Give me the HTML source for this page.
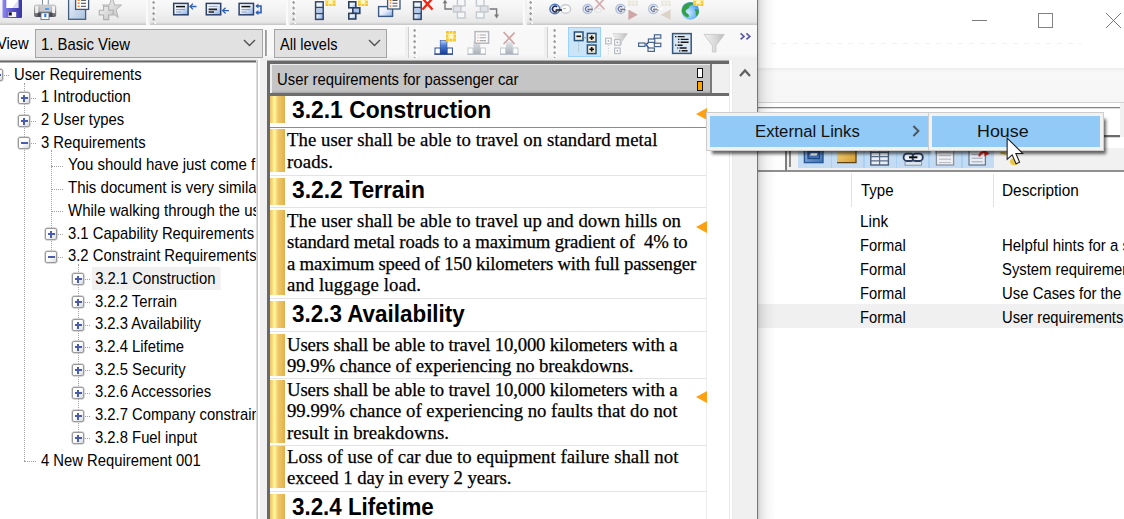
<!DOCTYPE html>
<html>
<head>
<meta charset="utf-8">
<title>Requirements</title>
<style>
*{box-sizing:border-box;margin:0;padding:0}
html,body{width:1124px;height:519px;overflow:hidden;background:#fff}
body{position:relative;font-family:"Liberation Sans",sans-serif;color:#000}
.abs{position:absolute}
/* ---------- left application window ---------- */
#win{left:0;top:0;width:757px;height:519px;background:#f0f0f0;overflow:hidden}
#shadow{left:758px;top:0;width:18px;height:519px;background:linear-gradient(90deg,rgba(0,0,0,.2) 0,rgba(0,0,0,.1) 3px,rgba(0,0,0,.04) 9px,rgba(0,0,0,0) 18px)}
#winedge{left:757px;top:0;width:1px;height:519px;background:#767676}
.strip{top:0;height:26px;background:linear-gradient(180deg,#f9f9f9 0,#f1f1f1 50%,#e7e7e7 22px,#d6d6d6 23.5px,#c4c4c4 25px,#e8e8e8 26px);border-right:2px solid #fafafa}
.grip{width:5px;height:24px;top:0;background-image:radial-gradient(circle at 1.6px 2.4px,#9c9c9c 1px,rgba(255,255,255,0) 1.5px),radial-gradient(circle at 2.9px 1.3px,#fff 1px,rgba(255,255,255,0) 1.5px);background-size:5px 5.6px}
#row2{left:0;top:25px;width:757px;height:36px;background:linear-gradient(180deg,#fbfbfb 0,#f8f8f8 6px,#f8f8f8 29px,#f0f0f0 33px,#ececec 36px)}
.combo{top:29px;height:29px;background:#e1e1e1;border:1px solid #a4a4a4;font-size:16.6px;line-height:29px;padding-left:5px;white-space:nowrap}
.combo span{display:inline-block;transform-origin:0 50%}
.vsep{width:2px;top:30px;height:26px;background:linear-gradient(90deg,#8f8f8f,#b5b5b5)}
/* tree */
#tree{left:-2px;top:60px;width:258px;height:470px;background:#fff;border-top:1px solid #a0a0a0;box-shadow:inset 0 1.5px 0 #696969;overflow:hidden}
.tn{position:absolute;height:23px;line-height:23px;font-size:16.6px;white-space:nowrap;transform:scaleX(.893);transform-origin:0 50%}
.bx{position:absolute;width:12px;height:12px;border:1px solid #9a9a9a;box-shadow:0 0 0 .5px #b5b5b5;border-radius:2px;background:linear-gradient(135deg,#fff 0,#fff 45%,#d9dbe0 100%)}
.bx:before{content:"";position:absolute;left:1.5px;top:4.4px;width:7px;height:1.3px;background:#4a5cae}
.bx.p:after{content:"";position:absolute;left:4.4px;top:1.5px;width:1.3px;height:7px;background:#4a5cae}
.hd{position:absolute;height:1px;border-top:1px dotted #a0a0a0}
.vd{position:absolute;width:1px;border-left:1px dotted #a0a0a0}
/* doc */
#doc{left:267px;top:61px;width:462px;height:470px;background:#fff;border-left:3px solid #696969;border-top:3px solid #696969;overflow:hidden}
.row{position:absolute;left:0;width:436px;border-bottom:1px solid #e3e3e3}
.gold{position:absolute;left:0;width:15px;background:linear-gradient(90deg,#edc262 0,#f6d77c 2px,#fff69a 4.5px,#f7dc80 6.5px,#eec668 8.5px,#e8bc5a 12px,#e0af4c 15px)}
.h{position:absolute;left:22px;font-weight:700;font-size:23.6px;white-space:nowrap;transform:scaleX(.968);transform-origin:0 0}
.t{position:absolute;left:17px;font-family:"Liberation Serif",serif;font-size:18.75px;white-space:nowrap;-webkit-text-stroke:0.25px #000}
.tri{position:absolute;width:0;height:0;border-top:6px solid transparent;border-bottom:6px solid transparent;border-right:11.5px solid #ffa012}
/* right */
.cell{position:absolute;font-size:16.3px;white-space:nowrap;line-height:24px;height:24px;transform-origin:0 50%}
.menu{background:#f2f2f2;border:1px solid #ccc;box-shadow:4px 5px 3px -2px rgba(0,0,0,.6)}
.mi{position:absolute;background:#91c9f7;font-size:16.7px;white-space:nowrap;color:#111}
.mi span{display:inline-block;transform-origin:0 50%}
</style>
</head>
<body>
<!-- right background window -->
<!--RS--><div class="abs" id="right" style="left:757px;top:0;width:367px;height:519px;background:#fff;overflow:hidden">
<div class="abs" style="left:215px;top:20px;width:15px;height:1px;background:#7c7c7c"></div>
<div class="abs" style="left:281px;top:13px;width:15px;height:15px;border:1px solid #828282"></div>
<svg class="abs" style="left:348px;top:12px" width="17" height="17" viewBox="0 0 17 17"><path d="M1 1 L16 16 M16 1 L1 16" stroke="#7a7a7a" stroke-width="1" fill="none"/></svg>
<div class="abs" style="left:14px;top:43px;width:310px;height:1px;background:repeating-linear-gradient(90deg,#f1f1f1 0 5px,#fff 5px 11px)"></div>
<div class="abs" style="left:0;top:68px;width:367px;height:35px;background:linear-gradient(180deg,#ededed 0,#f3f3f3 2px,#f8f8f8 5px,#f6f6f6 100%)"></div>
<div class="abs" style="left:0;top:102px;width:367px;height:1px;background:#d2d2d2"></div>
<div class="abs" style="left:0;top:107px;width:363px;height:1px;background:#848484"></div>
<div class="abs" style="left:0;top:108px;width:363px;height:1px;background:#dedede"></div>
<div class="abs" style="left:363px;top:103px;width:4px;height:34px;background:#f1f1f1"></div>
<div class="abs" style="left:343px;top:135px;width:20px;height:2px;background:#6a6a6a"></div>
<div class="abs" style="left:343px;top:137px;width:20px;height:1px;background:#d8d8d8"></div>
<div class="abs" style="left:0;top:148px;width:367px;height:23px;background:#f1f1f1"></div>
<div class="abs" style="left:0;top:148px;width:28px;height:23px;background:#fdfdfd"></div>
<div class="abs" style="left:0;top:170px;width:367px;height:1.5px;background:#8f8f8f"></div>
<div class="abs" style="left:28px;top:148px;width:1.5px;height:23px;background:#7d7d7d"></div>
<div class="abs" style="left:32px;top:148px;width:1.5px;height:19px;background:#8a8a8a"></div>
<div class="abs" style="left:41px;top:148px;width:196px;height:20px;background:#c4dcf3"></div>
<div class="abs" style="left:73.6px;top:148px;width:1.5px;height:20px;background:#a9d1f6"></div>
<div class="abs" style="left:106.2px;top:148px;width:1.5px;height:20px;background:#a9d1f6"></div>
<div class="abs" style="left:138.8px;top:148px;width:1.5px;height:20px;background:#a9d1f6"></div>
<div class="abs" style="left:171.4px;top:148px;width:1.5px;height:20px;background:#a9d1f6"></div>
<div class="abs" style="left:204.0px;top:148px;width:1.5px;height:20px;background:#a9d1f6"></div>
<svg class="abs" style="left:41px;top:148px" width="240" height="23" viewBox="798 148 240 23">
<defs><linearGradient id="rg1" x1="0" y1="0" x2="1" y2="1"><stop offset="0" stop-color="#f7dc8a"/><stop offset="1" stop-color="#d89a2c"/></linearGradient>
<linearGradient id="rg2" x1="0" y1="0" x2="1" y2="1"><stop offset="0" stop-color="#9dbde6"/><stop offset="1" stop-color="#3d6eb0"/></linearGradient></defs>
<rect x="804.4" y="146" width="18.6" height="16.6" fill="url(#rg2)" stroke="#2a5a96" stroke-width="1.4"/><rect x="808" y="150.6" width="11.4" height="8" fill="#3f70b4" stroke="#1f4a84" stroke-width="1.2"/><path d="M810 155.6L811 153H817.6L816.6 155.6Z" fill="#fff"/>
<rect x="837" y="146" width="18.6" height="16.4" fill="url(#rg1)"/><path d="M837 162.6H856V146" fill="none" stroke="#5a431a" stroke-width="1.3"/>
<rect x="870.8" y="146" width="17.6" height="19" fill="#e8eef6" stroke="#4a5d78" stroke-width="1.4"/><path d="M870.8 152.4H888.4M870.8 156.6H888.4M870.8 160.8H888.4M879.6 146V165" stroke="#5a6d88" stroke-width="1.2"/><rect x="872" y="146.4" width="15.4" height="5" fill="#6c7d96"/>
<rect x="905" y="161.6" width="16.6" height="3.6" fill="#dfe6f0" stroke="#7d8ca6" stroke-width=".9"/><rect x="903.6" y="153.6" width="10.4" height="7.4" rx="3.6" fill="#eef2f8" stroke="#2c3e60" stroke-width="1.9"/><rect x="912.4" y="153.6" width="10.4" height="7.4" rx="3.6" fill="#eef2f8" stroke="#2c3e60" stroke-width="1.9"/><path d="M909 157.3H917.4" stroke="#111" stroke-width="2"/>
<rect x="936.4" y="146" width="17.2" height="19" fill="#eef0f3" stroke="#8b939f" stroke-width="1.3"/><path d="M939 152H951M939 155.6H951M939 159.2H951M939 162.6H951" stroke="#b3b9c2" stroke-width="1"/>
<rect x="969" y="150" width="16.4" height="15" fill="#e9edf3" stroke="#6b7a90" stroke-width="1.3"/><path d="M971.6 154.6H982.6M971.6 158.2H982.6M971.6 161.8H982.6" stroke="#9aa5b5" stroke-width="1"/><path d="M979.4 156.4C979.6 153 982 151.6 985.4 152.4" stroke="#e02010" stroke-width="2.2" fill="none"/><path d="M984 149.6L989.6 153.4L984.6 156.4Z" fill="#e02010"/>
<ellipse cx="1014.4" cy="161.6" rx="4.6" ry="3.6" fill="#e9c64a"/><path d="M1000.6 153.4C1003 152.6 1005 153.2 1006 154.6" stroke="#d9b43c" stroke-width="2.4" fill="none"/>
</svg>
<div class="abs" style="left:94px;top:174px;width:1px;height:33px;background:#e2e2e2"></div>
<div class="abs" style="left:236px;top:174px;width:1px;height:33px;background:#e2e2e2"></div>
<div class="cell" style="left:103.6px;top:178.2px;transform:scaleX(.923)">Type</div>
<div class="cell" style="left:244.8px;top:178.2px;transform:scaleX(.943)">Description</div>
<div class="abs" style="left:0;top:304px;width:367px;height:24px;background:#f0f0f0"></div>
<div class="cell" style="left:102.6px;top:208.6px;transform:scaleX(0.944)">Link</div>
<div class="cell" style="left:102.6px;top:232.6px;transform:scaleX(0.902)">Formal</div>
<div class="cell" style="left:245.2px;top:232.6px;transform:scaleX(0.918)">Helpful hints for a successful</div>
<div class="cell" style="left:102.6px;top:256.6px;transform:scaleX(0.902)">Formal</div>
<div class="cell" style="left:245.2px;top:256.6px;transform:scaleX(0.910)">System requirements for</div>
<div class="cell" style="left:102.6px;top:280.6px;transform:scaleX(0.902)">Formal</div>
<div class="cell" style="left:245.2px;top:280.6px;transform:scaleX(0.915)">Use Cases for the car</div>
<div class="cell" style="left:102.6px;top:304.6px;transform:scaleX(0.902)">Formal</div>
<div class="cell" style="left:245.2px;top:304.6px;transform:scaleX(0.906)">User requirements for</div>
</div><!--RE-->
<div class="abs" id="win">
<!-- toolbar row 1 -->
<div class="abs strip" style="left:0;width:148px"></div>
<div class="abs strip" style="left:150px;width:138px"></div>
<div class="abs strip" style="left:290px;width:235px"></div>
<div class="abs strip" style="left:527px;width:232px"></div>
<div class="abs grip" style="left:152px"></div>
<div class="abs grip" style="left:292px"></div>
<div class="abs grip" style="left:529px"></div>
<!--I1S--><svg class="abs" style="left:0;top:0" width="757" height="25" viewBox="0 0 757 25">
<defs>
<linearGradient id="gb" x1="0" y1="0" x2="1" y2="1"><stop offset="0" stop-color="#fff"/><stop offset=".5" stop-color="#e6eefb"/><stop offset="1" stop-color="#7fa8e6"/></linearGradient>
<linearGradient id="gg" x1="0" y1="0" x2="1" y2="1"><stop offset="0" stop-color="#fff"/><stop offset="1" stop-color="#cfd3d8"/></linearGradient>
<linearGradient id="gfl" x1="0" y1="0" x2="1" y2="0"><stop offset="0" stop-color="#8f8af0"/><stop offset=".45" stop-color="#5a55cc"/><stop offset="1" stop-color="#3a38a0"/></linearGradient>
<linearGradient id="gdoc" x1="0" y1="0" x2="1" y2="1"><stop offset="0" stop-color="#f1f5fb"/><stop offset="1" stop-color="#a9c2df"/></linearGradient>
<linearGradient id="gpr" x1="0" y1="0" x2="0" y2="1"><stop offset="0" stop-color="#cfcfcf"/><stop offset=".45" stop-color="#9a9a9a"/><stop offset="1" stop-color="#5f5f66"/></linearGradient>
<linearGradient id="gst" x1="0" y1="0" x2="1" y2="1"><stop offset="0" stop-color="#f4f4f4"/><stop offset="1" stop-color="#c4c4c4"/></linearGradient>
<radialGradient id="gglobe" cx=".4" cy=".6" r=".7"><stop offset="0" stop-color="#cfeaff"/><stop offset=".6" stop-color="#6db7f5"/><stop offset="1" stop-color="#2f86d8"/></radialGradient>
<g id="star"><rect x="0" y="0" width="10" height="8" fill="#f6c62c"/><path d="M0 2.6H10M0 5.3H10M3.3 0V8M6.6 0V8" stroke="#fde88a" stroke-width="1.1"/><circle cx="5" cy="4" r="2.2" fill="#fff6c8"/></g>
<g id="stard"><rect x="0" y="0" width="10" height="8" fill="#dcd6c2"/><path d="M0 2.6H10M0 5.3H10M3.3 0V8M6.6 0V8" stroke="#f1eee4" stroke-width="1.1"/></g>
<g id="stk"><rect x=".8" y=".8" width="7.6" height="17.6" fill="url(#gb)" stroke="#33486a" stroke-width="1.5"/><path d="M.8 6.6H8.4M.8 12.6H8.4" stroke="#33486a" stroke-width="1.5"/><rect x="1.8" y="7.6" width="5.6" height="4" fill="#b4cbf0"/></g>
<g id="lnk"><ellipse cx="5.3" cy="5.2" rx="4.6" ry="4.4" fill="#f4f6fb" stroke="#9fb0cc" stroke-width="1.5"/><path d="M7 3.3A2.4 2.4 0 1 0 7 7" fill="none" stroke="#3b4a9a" stroke-width="1.3"/><path d="M5 5.6H10.5" stroke="#555" stroke-width="1.6"/></g>
</defs>
<rect x="2.5" y="-2" width="19.5" height="20" rx="1" fill="url(#gfl)"/>
<rect x="6.3" y="-2" width="12" height="10" fill="#fff"/><path d="M12 8 L18.3 0V8Z" fill="#dcdcf2"/>
<rect x="8.4" y="12" width="7.8" height="5" fill="#f4f4fa"/><rect x="8.8" y="12.3" width="3" height="3.2" fill="#15152a"/>
<rect x="42.4" y="-2" width="5.8" height="8" fill="#fff" stroke="#5d7186" stroke-width=".8"/>
<rect x="34" y="4.6" width="22.2" height="12.3" rx="2" fill="url(#gpr)"/>
<rect x="35.2" y="6" width="3.2" height="7" fill="#efefef"/><rect x="51.8" y="6" width="3.2" height="7" fill="#efefef"/>
<rect x="39.5" y="5.5" width="11.5" height="6" fill="#c9c9c9"/>
<rect x="45" y="8" width="4.2" height="2" rx=".8" fill="#4da0f5"/>
<rect x="37.8" y="12.6" width="14.6" height="4.2" fill="#4a4550"/>
<rect x="41" y="12.8" width="8" height="6.8" fill="#fff" stroke="#5d7186" stroke-width=".9"/><rect x="44.2" y="13.8" width="2.2" height="3.4" fill="#3f7be8"/>
<rect x="68.6" y="-2" width="17" height="21.3" fill="url(#gdoc)" stroke="#44607f" stroke-width="1.3"/>
<rect x="75.6" y="-2" width="13" height="11.4" fill="#fbfbfb" stroke="#3f5878" stroke-width="1.3"/>
<path d="M81 0.3H86M81 3.3H86M81 6.3H86" stroke="#666" stroke-width="1.2"/><path d="M77.6 0.3H79.6M77.6 3.3H79.6M77.6 6.3H79.6" stroke="#ff7a1a" stroke-width="1.4"/>
<path d="M112 -3 L114.6 5 L121.6 5 L116.2 9.6 L118.2 17.5 L112 13 L107 16 L107.8 9.6 L102.6 5 L109.4 5Z" fill="url(#gst)" stroke="#b4b4b4" stroke-width="1"/>
<path d="M103.6 6.2H108.8V10.2H113.2V15H108.8V19.6H103.6V15H99.3V10.2H103.6Z" fill="url(#gst)" stroke="#aeaeae" stroke-width="1.1"/>
<rect x="173.7" y="3.4" width="14.4" height="11.4" fill="url(#gb)" stroke="#2b426b" stroke-width="1.5"/>
<path d="M176 6.6H185" stroke="#111" stroke-width="1.5"/><path d="M176 9.6H185M176 12H181" stroke="#8d9db8" stroke-width="1"/>
<path d="M190 6.5H196.5M193 3.6L190 6.5L193 9.4" fill="none" stroke="#2f5fb8" stroke-width="1.3"/>
<rect x="206.3" y="3.4" width="14.4" height="11.4" fill="url(#gb)" stroke="#2b426b" stroke-width="1.5"/>
<path d="M208.6 6.4H217.6" stroke="#9aa8bf" stroke-width="1"/><path d="M208.6 9.4H217M208.6 12H214" stroke="#222" stroke-width="1.6"/>
<path d="M222.6 10.6H229M225.6 7.7L222.6 10.6L225.6 13.5" fill="none" stroke="#2f5fb8" stroke-width="1.3"/>
<rect x="239.1" y="3.4" width="14.4" height="11.4" fill="url(#gb)" stroke="#2b426b" stroke-width="1.5"/>
<path d="M241.4 6.6H250.4" stroke="#111" stroke-width="1.5"/><path d="M241.4 9.6H250.4M241.4 12H246.4" stroke="#8d9db8" stroke-width="1"/>
<path d="M256 6H261V12.6H256" fill="none" stroke="#2f5fb8" stroke-width="1.6"/><path d="M258.4 3.4L255.4 6L258.4 8.6ZM258.4 10L255.4 12.6L258.4 15.2Z" fill="#2f5fb8"/>
<use href="#stk" x="314.8" y="1"/><use href="#star" x="325.5" y="-2"/>
<rect x="348.8" y="1.8" width="7.0" height="6.0" fill="url(#gb)" stroke="#2c3f5e" stroke-width="1.6"/>
<rect x="352.8" y="7.8" width="7.0" height="5.6" fill="#a9c4ee" stroke="#2c3f5e" stroke-width="1.6"/>
<rect x="348.8" y="13.4" width="7.0" height="5.6" fill="url(#gb)" stroke="#2c3f5e" stroke-width="1.6"/>
<use href="#star" x="358" y="-2"/>
<rect x="378.6" y="6.6" width="14.0" height="9.8" fill="url(#gb)" stroke="#3f5a82" stroke-width="1.4"/>
<rect x="387.6" y="-2.0" width="12.4" height="11.0" fill="#fafafa" stroke="#3f5878" stroke-width="1.3"/>
<path d="M392.5 0.4H397.5M392.5 3.2H397.5M392.5 6H397.5" stroke="#555" stroke-width="1.1"/><path d="M389.6 0.4H391.2M389.6 3.2H391.2M389.6 6H391.2" stroke="#ff7a1a" stroke-width="1.3"/>
<use href="#stk" x="412.8" y="1"/>
<path d="M423 -1L432.5 9.5M432 -1L422.5 9.5" stroke="#f02410" stroke-width="2.3" fill="none"/>
<rect x="457.4" y="-1.0" width="7.6" height="7.0" fill="#f6f7f9" stroke="#c4c8cf" stroke-width="1.4"/>
<rect x="453.4" y="6.0" width="7.6" height="6.0" fill="#dfe3e8" stroke="#c4c8cf" stroke-width="1.4"/>
<rect x="457.4" y="12.0" width="7.6" height="6.0" fill="#f6f7f9" stroke="#c4c8cf" stroke-width="1.4"/>
<path d="M445 1V9H452" fill="none" stroke="#7a7a7a" stroke-width="1.4"/><path d="M442.6 3.2L445 -0.4L447.4 3.2Z" fill="#7a7a7a"/>
<rect x="476.4" y="-1.0" width="7.6" height="7.0" fill="#f6f7f9" stroke="#c4c8cf" stroke-width="1.4"/>
<rect x="480.4" y="6.0" width="7.6" height="6.0" fill="#dfe3e8" stroke="#c4c8cf" stroke-width="1.4"/>
<rect x="476.4" y="12.0" width="7.6" height="6.0" fill="#f6f7f9" stroke="#c4c8cf" stroke-width="1.4"/>
<path d="M489.6 9H496.6V15" fill="none" stroke="#7a7a7a" stroke-width="1.4"/><path d="M494.2 14.4L496.6 18.4L499 14.4Z" fill="#7a7a7a"/>
<ellipse cx="565.6" cy="9" rx="5" ry="4.2" fill="#fafafa" stroke="#c9ccd2" stroke-width="1.4"/>
<ellipse cx="554.8" cy="9" rx="4.9" ry="4.7" fill="#e9eef8" stroke="#4f78bd" stroke-width="1.5"/><path d="M557 6.8A2.8 2.8 0 1 0 557 11.2" fill="none" stroke="#20264a" stroke-width="1.5"/><path d="M555.6 10H562" stroke="#222" stroke-width="1.6"/><path d="M563 8.6h3" stroke="#bbb" stroke-width="1"/>
<g opacity=".75"><use href="#lnk" x="582.4" y="3.8"/></g><path d="M595 -1L604.5 9.5M604 -1L594.5 9.5" stroke="#d3aeb0" stroke-width="1.8" fill="none"/><ellipse cx="598" cy="10.4" rx="3.4" ry="2.2" fill="none" stroke="#e2e2e6" stroke-width="1"/>
<g opacity=".75"><use href="#lnk" x="615.2" y="3.8"/></g><g opacity=".55"><use href="#stard" x="628" y="-2"/></g><path d="M628.4 9.6L637.8 14.8L628.4 20Z" fill="#cfa6a6"/><path d="M625 8.6h5" stroke="#fff" stroke-width="1.6"/>
<g opacity=".7"><use href="#lnk" x="648" y="3.8"/></g><g opacity=".5"><use href="#stard" x="661" y="-2"/></g><path d="M670.6 9.6L660.8 14.8L670.6 20Z" fill="#dcd2c8"/><path d="M657 8.6h6" stroke="#fff" stroke-width="1.6"/>
<circle cx="690.2" cy="10.8" r="8.9" fill="url(#gglobe)"/>
<path d="M683 6.5C685 3.5 689 2 692.6 2.6C694 3.4 692.6 5 690.6 5.6C688.6 6.4 689.6 8.4 687.6 9C685.8 9.6 685 11 686 12.4C687 13.6 688.6 13.6 689 15.4C689.2 17 687.6 17.6 686 16.8C683.4 15.4 681.8 13 681.8 10.5C682 9 682.4 7.6 683 6.5Z" fill="#34a044"/>
<path d="M695 9C696.4 8.6 698 9.4 698.8 10.8C699 13 698.2 15 696.8 16.2C695.8 15.4 695.6 14 695.8 12.8C696 11.4 694.4 9.8 695 9Z" fill="#34a044"/>
<use href="#star" x="693.4" y="-2"/>
</svg><!--I1E-->
<!-- row 2 -->
<div class="abs" id="row2"></div>
<div class="abs" style="left:-3px;top:29px;height:29px;line-height:29px;font-size:16.6px;transform:scaleX(.89);transform-origin:0 50%">View</div>
<div class="abs combo" style="left:35px;width:228px"><span style="transform:scaleX(.897)">1. Basic View</span></div>
<div class="abs combo" style="left:274px;width:113px"><span style="transform:scaleX(.878)">All levels</span></div>
<svg class="abs" style="left:243px;top:39px" width="13" height="8" viewBox="0 0 13 8"><path d="M1 1 L6.5 6.5 L12 1" fill="none" stroke="#505050" stroke-width="1.4"/></svg>
<svg class="abs" style="left:368px;top:39px" width="13" height="8" viewBox="0 0 13 8"><path d="M1 1 L6.5 6.5 L12 1" fill="none" stroke="#505050" stroke-width="1.4"/></svg>
<div class="abs vsep" style="left:265px"></div>
<div class="abs" style="left:405px;top:27px;width:4px;height:31px;background:#f0f0f0;border-right:1px solid #cfcfcf"></div>
<div class="abs" style="left:544px;top:27px;width:4px;height:31px;background:#f0f0f0;border-right:1px solid #cfcfcf"></div>
<div class="abs grip" style="left:413px;top:28px;height:30px"></div>
<div class="abs grip" style="left:553px;top:28px;height:30px"></div>
<div class="abs" style="left:568px;top:27px;width:33px;height:30px;background:#cce4f7;border:1px solid #99d1ff"></div>
<!--I2S--><svg class="abs" style="left:400px;top:25px" width="357" height="36" viewBox="400 25 357 36">
<defs>
<linearGradient id="hb" x1="0" y1="0" x2="0" y2="1"><stop offset="0" stop-color="#b9cff2"/><stop offset=".35" stop-color="#4f7fd6"/><stop offset="1" stop-color="#143c98"/></linearGradient>
<linearGradient id="hg" x1="0" y1="0" x2="0" y2="1"><stop offset="0" stop-color="#e2e5e9"/><stop offset="1" stop-color="#a9b0b8"/></linearGradient>
<linearGradient id="hf" x1="0" y1="0" x2="1" y2="0"><stop offset="0" stop-color="#f2f2f2"/><stop offset=".6" stop-color="#d6d6d6"/><stop offset="1" stop-color="#b9b9b9"/></linearGradient>
<linearGradient id="hbx" x1="0" y1="0" x2="1" y2="1"><stop offset="0" stop-color="#fbf8ee"/><stop offset="1" stop-color="#e9e2cc"/></linearGradient>
<g id="star2"><rect x="0" y="0" width="10" height="10.4" fill="#f6c62c"/><path d="M0 3.4H10M0 7H10M3.3 0V10.4M6.6 0V10.4" stroke="#fde88a" stroke-width="1.1"/><circle cx="5" cy="5.2" r="2.6" fill="#fff6c8"/></g>
</defs>
<rect x="435" y="48" width="5.4" height="6" fill="#fff" stroke="#2d4f9c" stroke-width="1"/><rect x="447" y="48" width="5.4" height="6" fill="#fff" stroke="#2d4f9c" stroke-width="1"/>
<rect x="440.2" y="40.6" width="6.8" height="13.6" fill="url(#hb)" stroke="#2d4f9c" stroke-width=".6"/>
<path d="M434.3 54.2H453" stroke="#22397a" stroke-width="1"/>
<use href="#star2" x="446" y="31"/>
<rect x="468" y="48" width="5" height="6" fill="#fff" stroke="#c3c8cf" stroke-width="1"/><rect x="480.4" y="48" width="5" height="6" fill="#fff" stroke="#c3c8cf" stroke-width="1"/>
<rect x="473.4" y="41" width="6.8" height="13.2" fill="url(#hg)"/>
<path d="M467.4 54.3H486" stroke="#b0b6bf" stroke-width="1"/>
<rect x="475" y="31.6" width="13.6" height="11.6" fill="#fbfbfb" stroke="#b5b8bd" stroke-width="1.5"/>
<path d="M479.6 35H486M479.6 37.8H486M479.6 40.6H486" stroke="#a9a9a9" stroke-width="1.1"/><path d="M477 35H478.6M477 37.8H478.6M477 40.6H478.6" stroke="#e6b49a" stroke-width="1.1"/>
<rect x="500.6" y="48" width="5" height="6" fill="#fff" stroke="#c3c8cf" stroke-width="1"/><rect x="513" y="48" width="5" height="6" fill="#fff" stroke="#c3c8cf" stroke-width="1"/>
<rect x="506" y="41.6" width="6.8" height="12.6" fill="url(#hg)"/>
<path d="M500 54.3H518.6" stroke="#b0b6bf" stroke-width="1"/>
<path d="M503.6 32L514.6 44M514.6 32.6L503.6 44" stroke="#cfa5a5" stroke-width="1.7" fill="none"/>
<rect x="574.4" y="32.0" width="8.6" height="8.6" fill="url(#hbx)" stroke="#24507e" stroke-width="1.5"/>
<path d="M576.4 36.3H581.0" stroke="#111" stroke-width="1.6"/>
<rect x="587.4" y="33.4" width="8.6" height="8.6" fill="url(#hbx)" stroke="#24507e" stroke-width="1.5"/>
<path d="M589.4 37.7H594.0" stroke="#111" stroke-width="1.6"/>
<path d="M591.7 35.4V40.0" stroke="#111" stroke-width="1.6"/>
<rect x="587.4" y="45.0" width="8.6" height="8.6" fill="url(#hbx)" stroke="#24507e" stroke-width="1.5"/>
<path d="M589.4 49.3H594.0" stroke="#111" stroke-width="1.6"/>
<path d="M591.7 47.0V51.6" stroke="#111" stroke-width="1.6"/>
<path d="M578.7 42.4V53" stroke="#8aa" stroke-width="1" stroke-dasharray="1 1.6"/><path d="M584 37.7H587" stroke="#8aa" stroke-width="1"/><path d="M591.7 42V45" stroke="#8aa" stroke-width="1"/>
<path d="M613 33.6H627.4L621.6 42V44.6H618.2V42Z" fill="url(#hf)" stroke="#c8c8c8" stroke-width=".6"/>
<rect x="605.6" y="38.2" width="5.6" height="5.6" fill="#fafafa" stroke="#b9bec6" stroke-width="1.2"/><rect x="607.7" y="40.3" width="1.4" height="1.4" fill="#999"/>
<rect x="614.6" y="39.6" width="5.6" height="5.6" fill="#fafafa" stroke="#b9bec6" stroke-width="1.2"/><rect x="616.7" y="41.7" width="1.4" height="1.4" fill="#999"/>
<rect x="614.6" y="48.0" width="5.6" height="5.6" fill="#fafafa" stroke="#b9bec6" stroke-width="1.2"/><rect x="616.7" y="50.1" width="1.4" height="1.4" fill="#999"/>
<path d="M608.4 45V54" stroke="#c5c5c5" stroke-width="1" stroke-dasharray="1 1.8"/>
<path d="M645.6 44.6C648 44 649 41 651.4 40.6M651.4 40.6C654 40 654.6 37 656.6 36.4M651.4 40.6C654 41.4 654.6 44.4 656.6 44.8M645.6 44.6C648 45.4 648.4 49 650.4 49.6" stroke="#2b50a8" stroke-width="1.5" fill="none"/>
<rect x="638.6" y="43.0" width="6.4" height="3.4" fill="#f3f6fb" stroke="#4a668c" stroke-width="1.2"/>
<rect x="648.4" y="39.0" width="6.4" height="3.4" fill="#f3f6fb" stroke="#4a668c" stroke-width="1.2"/>
<rect x="654.4" y="34.8" width="6.4" height="3.4" fill="#f3f6fb" stroke="#4a668c" stroke-width="1.2"/>
<rect x="654.4" y="43.2" width="6.4" height="3.4" fill="#f3f6fb" stroke="#4a668c" stroke-width="1.2"/>
<rect x="648.0" y="48.0" width="6.4" height="3.4" fill="#f3f6fb" stroke="#4a668c" stroke-width="1.2"/>
<rect x="672.6" y="33.6" width="18.6" height="19.8" fill="#d9e6f3" stroke="#35577c" stroke-width="1.5"/>
<path d="M677.6 36.6H684.6M680.6 39.4H688.6M680.6 42.2H688.6M677.6 45.2H682.6M679.6 48H686.6M681.6 50.8H687.6" stroke="#1a1a1a" stroke-width="1.4"/>
<path d="M675 36.6h1.4M678 39.4h1.4M678 42.2h1.4M675 45.2h1.4M677 48h1.4M679 50.8h1.4" stroke="#1a1a1a" stroke-width="1.2"/>
<path d="M704 34.4H724.4L716 45.6V52H712.4V45.6Z" fill="url(#hf)" stroke="#c4c4c4" stroke-width=".8"/>
<path d="M740.6 33.4L744 36.4L740.6 39.4M746.4 33.4L749.8 36.4L746.4 39.4" stroke="#5b5aa6" stroke-width="1.7" fill="none"/>
</svg><!--I2E-->
<!--TS--><div class="abs" id="tree">
<div class="vd" style="left:26px;top:22px;height:378px"></div>
<div class="vd" style="left:53px;top:89px;height:106px"></div>
<div class="vd" style="left:80px;top:203px;height:174px"></div>
<div class="tn" style="left:15.8px;top:1.6px">User Requirements</div>
<div class="hd" style="left:6px;top:14px;width:5px"></div>
<div class="bx " style="left:-7px;top:8px"></div>
<div class="tn" style="left:42.8px;top:24.3px">1 Introduction</div>
<div class="hd" style="left:33px;top:37px;width:5px"></div>
<div class="bx p" style="left:20px;top:31px"></div>
<div class="tn" style="left:42.8px;top:47.0px">2 User types</div>
<div class="hd" style="left:33px;top:60px;width:5px"></div>
<div class="bx p" style="left:20px;top:54px"></div>
<div class="tn" style="left:42.8px;top:69.7px">3 Requirements</div>
<div class="hd" style="left:33px;top:82px;width:5px"></div>
<div class="bx " style="left:20px;top:76px"></div>
<div class="tn" style="left:69.8px;top:92.4px;transform:scaleX(.905)">You should have just come from the</div>
<div class="hd" style="left:53px;top:105px;width:12px"></div>
<div class="tn" style="left:69.8px;top:115.1px;transform:scaleX(.905)">This document is very similar to</div>
<div class="hd" style="left:53px;top:128px;width:12px"></div>
<div class="tn" style="left:69.8px;top:137.8px;transform:scaleX(.905)">While walking through the user</div>
<div class="hd" style="left:53px;top:150px;width:12px"></div>
<div class="tn" style="left:69.8px;top:160.5px">3.1 Capability Requirements</div>
<div class="hd" style="left:60px;top:173px;width:5px"></div>
<div class="bx p" style="left:47px;top:167px"></div>
<div class="tn" style="left:69.8px;top:183.2px">3.2 Constraint Requirements</div>
<div class="hd" style="left:60px;top:196px;width:5px"></div>
<div class="bx " style="left:47px;top:190px"></div>
<div class="tn" style="left:96.8px;top:205.9px;background:#f0f0f0;padding:0 6px 0 3.5px;margin-left:-3.2px">3.2.1 Construction</div>
<div class="hd" style="left:87px;top:218px;width:5px"></div>
<div class="bx p" style="left:74px;top:212px"></div>
<div class="tn" style="left:96.8px;top:228.6px">3.2.2 Terrain</div>
<div class="hd" style="left:87px;top:241px;width:5px"></div>
<div class="bx p" style="left:74px;top:235px"></div>
<div class="tn" style="left:96.8px;top:251.3px">3.2.3 Availability</div>
<div class="hd" style="left:87px;top:264px;width:5px"></div>
<div class="bx p" style="left:74px;top:258px"></div>
<div class="tn" style="left:96.8px;top:274.0px">3.2.4 Lifetime</div>
<div class="hd" style="left:87px;top:286px;width:5px"></div>
<div class="bx p" style="left:74px;top:280px"></div>
<div class="tn" style="left:96.8px;top:296.7px">3.2.5 Security</div>
<div class="hd" style="left:87px;top:309px;width:5px"></div>
<div class="bx p" style="left:74px;top:303px"></div>
<div class="tn" style="left:96.8px;top:319.4px">3.2.6 Accessories</div>
<div class="hd" style="left:87px;top:332px;width:5px"></div>
<div class="bx p" style="left:74px;top:326px"></div>
<div class="tn" style="left:96.8px;top:342.1px">3.2.7 Company constraints</div>
<div class="hd" style="left:87px;top:355px;width:5px"></div>
<div class="bx p" style="left:74px;top:349px"></div>
<div class="tn" style="left:96.8px;top:364.8px">3.2.8 Fuel input</div>
<div class="hd" style="left:87px;top:377px;width:5px"></div>
<div class="bx p" style="left:74px;top:371px"></div>
<div class="tn" style="left:42.8px;top:387.5px">4 New Requirement 001</div>
<div class="hd" style="left:26px;top:400px;width:12px"></div>
</div>
<div class="abs" style="left:256px;top:60px;width:2px;height:460px;background:linear-gradient(90deg,#e6e6e6,#bcbcbc)"></div>
<div class="abs" style="left:258px;top:59px;width:2px;height:461px;background:#fdfdfd"></div><!--TE-->
<div class="abs" style="left:267px;top:60px;width:462px;height:1px;background:#b0b0b0"></div>
<!--DS--><div class="abs" id="doc">
<div class="abs" style="left:0;top:0;width:440px;height:29px;background:linear-gradient(180deg,#c5c5c5 0,#c5c5c5 25px,#b4b4b4 27px,#8c8c8c 29px);border-top:1px solid #ececec;border-left:2px solid #ececec"></div>
<div class="abs" style="left:7px;top:0px;height:30px;line-height:31px;font-size:16.4px;white-space:nowrap;transform:scaleX(.905);transform-origin:0 50%">User requirements for passenger car</div>
<div class="abs" style="left:440px;top:0;width:2px;height:29px;background:#7a7a7a"></div>
<div class="abs" style="left:442px;top:0;width:17px;height:29px;background:#f0f0f0"></div>
<div class="abs" style="left:0;top:29px;width:459px;height:3px;background:#6d6d6d"></div>
<div class="abs" style="left:427px;top:4px;width:6px;height:10px;border:1px solid #111;background:#fff"></div>
<div class="abs" style="left:427px;top:17px;width:6px;height:10px;border:1px solid #111;background:#ffa500"></div>
<div class="abs" style="left:436px;top:32px;width:1px;height:460px;background:#ededed"></div>
<div class="row" style="top:32px;height:32px;border-bottom-color:#8c8c8c">
<div class="gold" style="top:0px;bottom:auto;height:27px"></div>
<div class="h" style="top:-0.3px;line-height:28px">3.2.1 Construction</div>
</div>
<div class="row" style="top:64px;height:48px;border-bottom-color:#e3e3e3">
<div class="gold" style="top:1px;bottom:auto;height:43px"></div>
<div class="t" style="top:0.87px;line-height:22px;letter-spacing:0.046px">The user shall be able to travel on standard metal</div>
<div class="t" style="top:22.87px;line-height:22px;letter-spacing:0.115px">roads.</div>
</div>
<div class="row" style="top:112px;height:32px;border-bottom-color:#e3e3e3">
<div class="gold" style="top:2px;bottom:auto;height:27px"></div>
<div class="h" style="top:0.2px;line-height:28px">3.2.2 Terrain</div>
</div>
<div class="row" style="top:144px;height:91px;border-bottom-color:#e3e3e3">
<div class="gold" style="top:2px;bottom:auto;height:85px"></div>
<div class="t" style="top:1.97px;line-height:22px;letter-spacing:0.036px">The user shall be able to travel up and down hills on</div>
<div class="t" style="top:23.37px;line-height:22px;letter-spacing:-0.149px">standard metal roads to a maximum gradient of&nbsp; 4% to</div>
<div class="t" style="top:44.67px;line-height:22px;letter-spacing:-0.222px">a maximum speed of 150 kilometers with full passenger</div>
<div class="t" style="top:65.87px;line-height:22px;letter-spacing:0.072px">and luggage load.</div>
</div>
<div class="row" style="top:235px;height:33px;border-bottom-color:#e3e3e3">
<div class="gold" style="top:2px;bottom:auto;height:27px"></div>
<div class="h" style="top:0.7px;line-height:28px;transform:scaleX(.95)">3.2.3 Availability</div>
</div>
<div class="row" style="top:268px;height:47px;border-bottom-color:#e3e3e3">
<div class="gold" style="top:2px;bottom:auto;height:42px"></div>
<div class="t" style="top:1.57px;line-height:22px;letter-spacing:-0.157px">Users shall be able to travel 10,000 kilometers with a</div>
<div class="t" style="top:22.97px;line-height:22px;letter-spacing:-0.095px">99.9% chance of experiencing no breakdowns.</div>
</div>
<div class="row" style="top:315px;height:67px;border-bottom-color:#e3e3e3">
<div class="gold" style="top:1px;bottom:auto;height:63px"></div>
<div class="t" style="top:-0.23px;line-height:22px;letter-spacing:-0.157px">Users shall be able to travel 10,000 kilometers with a</div>
<div class="t" style="top:21.17px;line-height:22px;letter-spacing:-0.012px">99.99% chance of experiencing no faults that do not</div>
<div class="t" style="top:42.87px;line-height:22px;letter-spacing:0.052px">result in breakdowns.</div>
</div>
<div class="row" style="top:382px;height:46px;border-bottom-color:#e3e3e3">
<div class="gold" style="top:0px;bottom:auto;height:42px"></div>
<div class="t" style="top:-0.13px;line-height:22px;letter-spacing:0.016px">Loss of use of car due to equipment failure shall not</div>
<div class="t" style="top:21.27px;line-height:22px;letter-spacing:-0.072px">exceed 1 day in every 2 years.</div>
</div>
<div class="row" style="top:428px;height:32px;border-bottom-color:#e3e3e3">
<div class="gold" style="top:2px;bottom:auto;height:36px"></div>
<div class="h" style="top:0.8px;line-height:28px;transform:scaleX(.948)">3.2.4 Lifetime</div>
</div>
<div class="tri" style="left:426.0px;top:43.5px"></div>
<div class="tri" style="left:426.0px;top:157.0px"></div>
<div class="tri" style="left:426.0px;top:326.5px"></div>
</div><!--DE-->
<div class="abs" style="left:729px;top:60px;width:28px;height:460px;background:linear-gradient(90deg,#e9e9e9 0,#e9e9e9 1px,#fff 1px,#fff 3px,#e9e9e9 3px,#e9e9e9 4px,#f0f0f0 4px)"></div>
<svg class="abs" style="left:739px;top:68px" width="12" height="9" viewBox="0 0 12 9"><path d="M1 8 L6 2.5 L11 8" fill="none" stroke="#606060" stroke-width="2.2"/></svg>
</div>
<div class="abs" id="winedge"></div>
<div class="abs" id="shadow"></div>
<div class="abs menu" style="left:706px;top:112px;width:224px;height:39px"></div>
<div class="abs menu" style="left:928px;top:112px;width:176px;height:39px"></div>
<div class="abs mi" style="left:710px;top:116px;width:218px;height:31px;line-height:32px;padding-left:45px"><span style="transform:scaleX(1.0)">External Links</span></div>
<div class="abs mi" style="left:932px;top:116px;width:168px;height:31px;line-height:32px;padding-left:44.5px"><span style="transform:scaleX(1.07)">House</span></div>
<svg class="abs" style="left:912px;top:125px" width="8" height="12" viewBox="0 0 8 12"><path d="M1.4 1 L6.4 6 L1.4 11" fill="none" stroke="#4d5560" stroke-width="2"/></svg>
<svg class="abs" id="cursor" style="left:1005.5px;top:136.5px" width="19" height="29" viewBox="0 0 17 26"><path d="M1 1 L1 20 L5.5 16 L9 24 L12.2 22.6 L8.8 14.8 L15 14.8 Z" fill="#fff" stroke="#1a1a1a" stroke-width="0.95" stroke-linejoin="miter"/></svg>
</body>
</html>
